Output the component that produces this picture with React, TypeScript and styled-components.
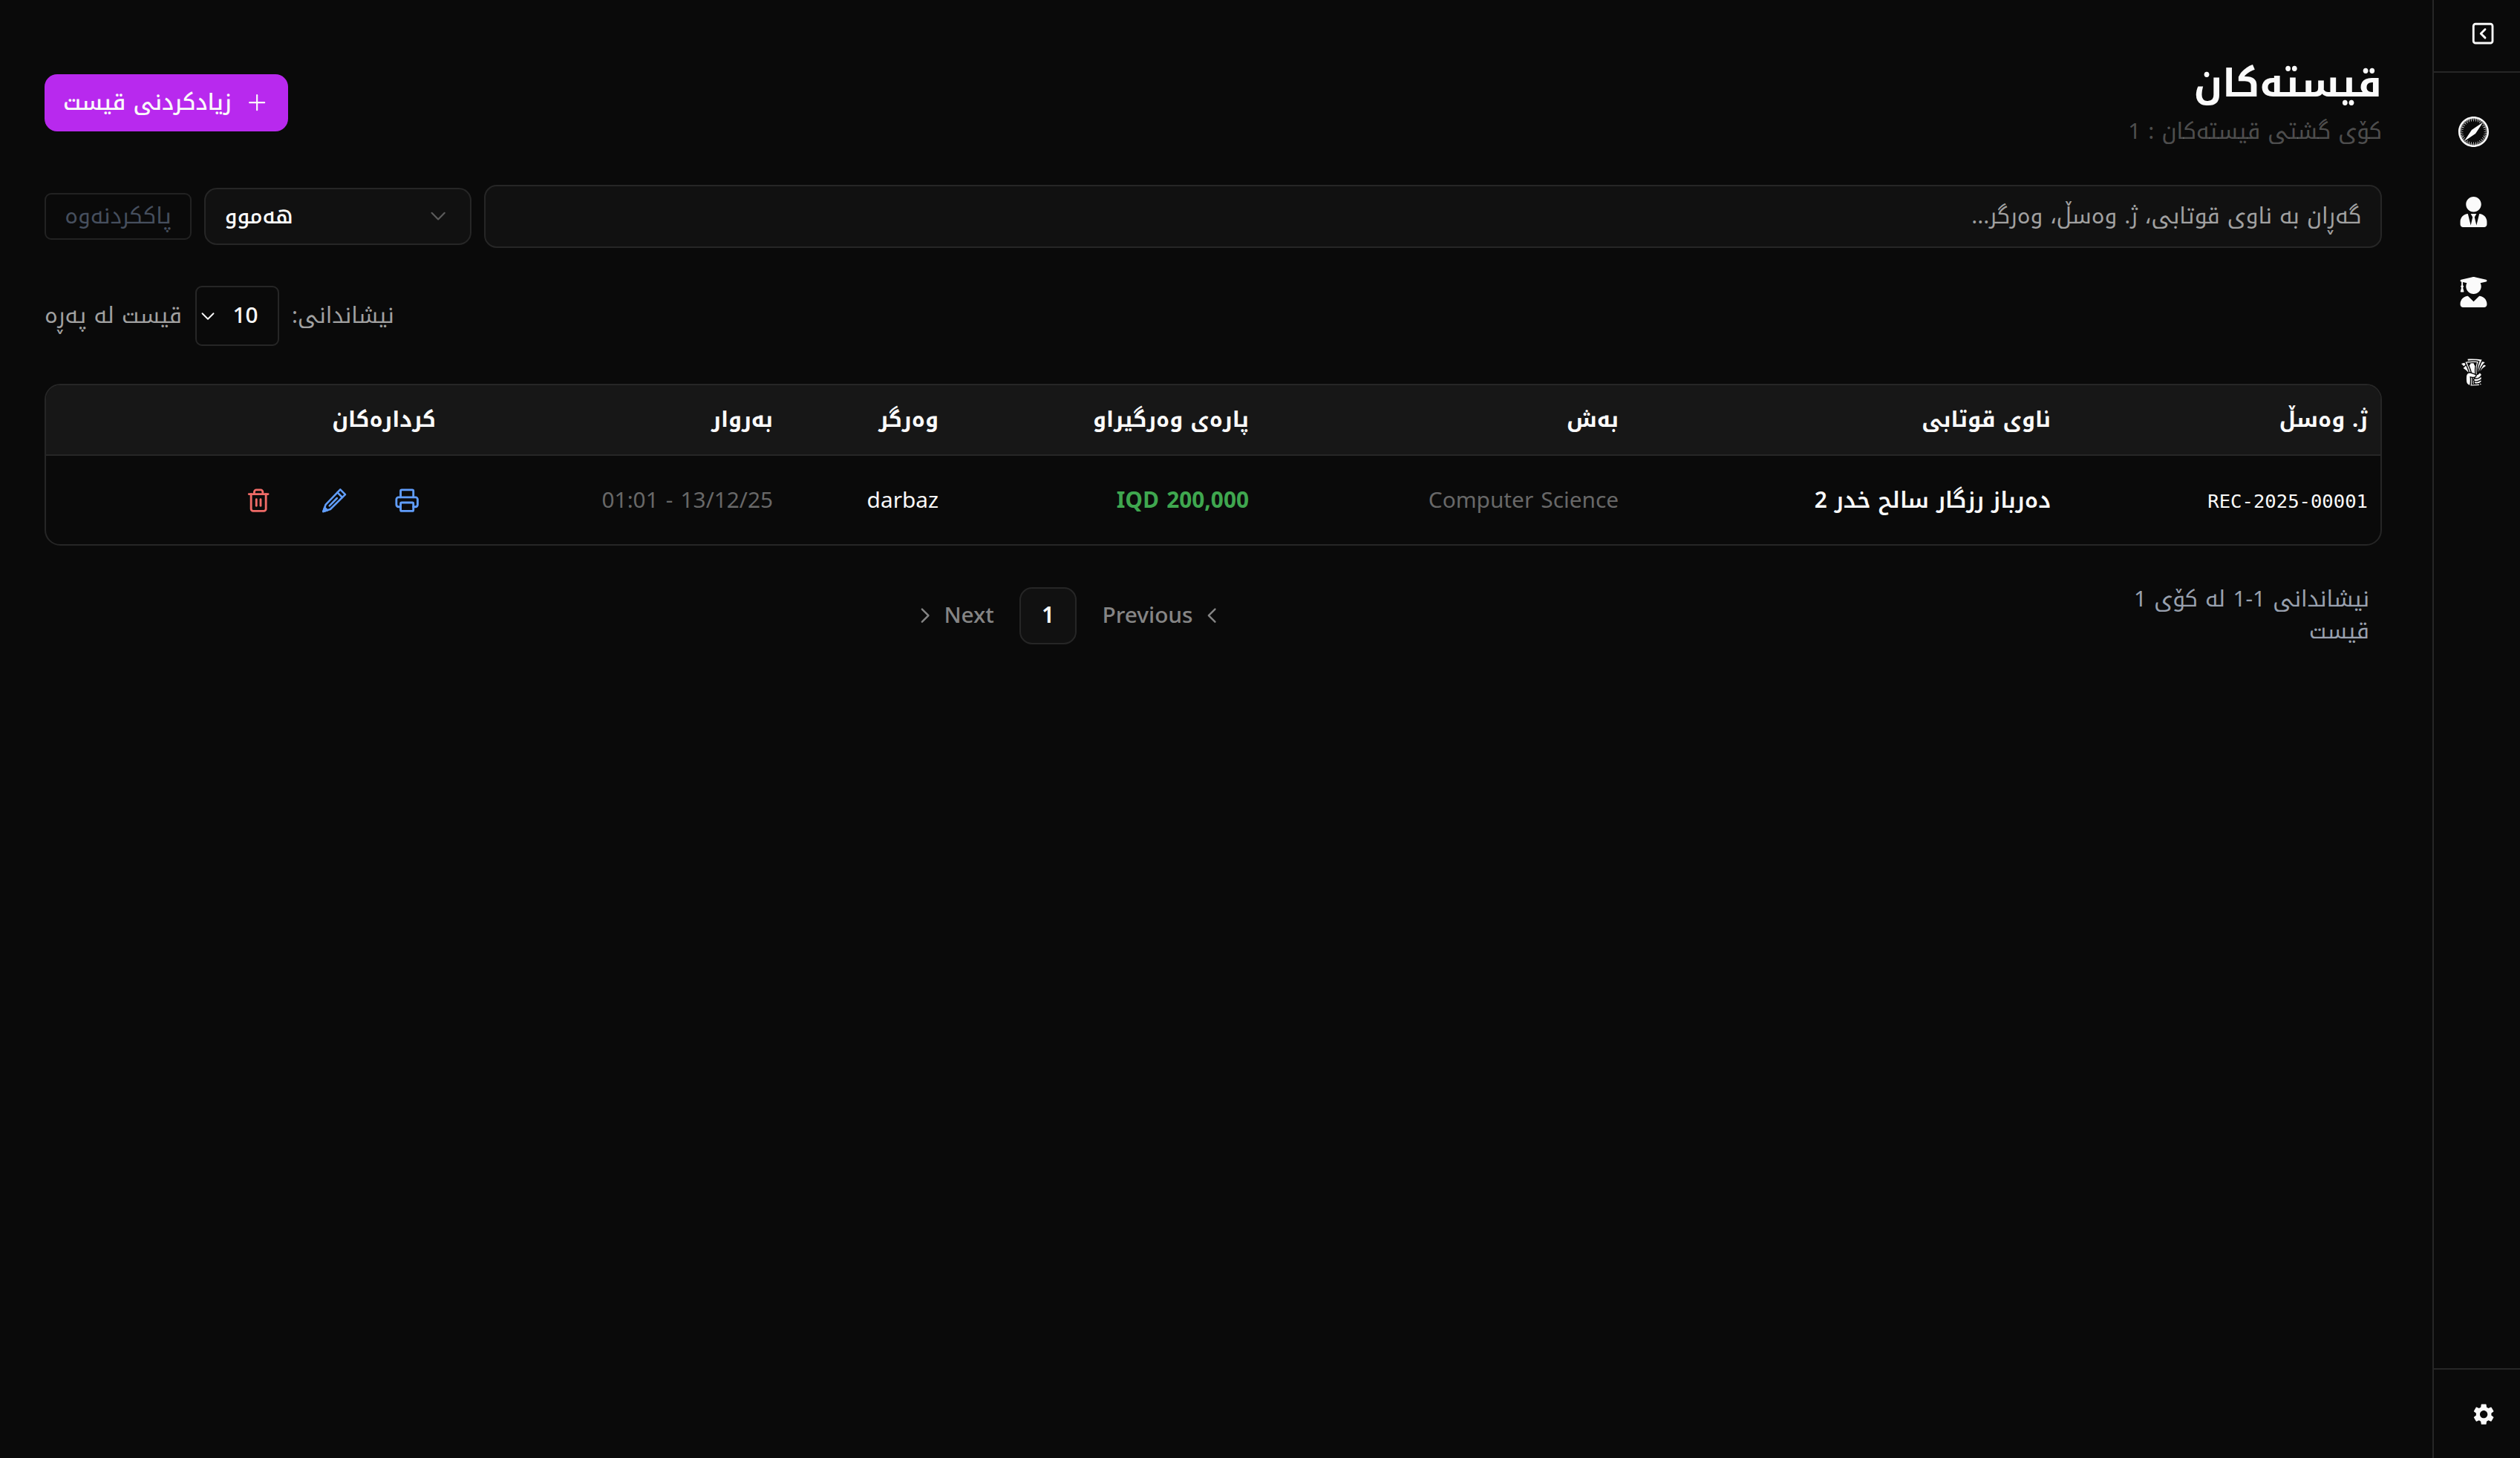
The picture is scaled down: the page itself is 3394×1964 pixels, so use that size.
import React, { useState } from "react";
import styled, { createGlobalStyle } from "styled-components";
import { ChevronDown, ChevronLeft, ChevronRight, Plus, Printer, SquareChevronLeft, Trash2 } from "lucide-react";
import { FaUserGraduate, FaUserTie } from "react-icons/fa";
import { GiTakeMyMoney } from "react-icons/gi";
import { ImSafari } from "react-icons/im";
import { MdSettings } from "react-icons/md";

const ICON = 34.3;

const payments = [
  {
    receipt: "REC-2025-00001",
    student: "دەرباز رزگار سالح خدر 2",
    department: "Computer Science",
    amount: "IQD 200,000",
    receiver: "darbaz",
    date: "01:01 - 13/12/25",
  },
];

const columns = ["ژ. وەسڵ", "ناوی قوتابی", "بەش", "پارەی وەرگیراو", "وەرگر", "بەروار", "کردارەکان"];

const menu = [ImSafari, FaUserTie, FaUserGraduate, GiTakeMyMoney];

const PencilIcon = () => (
  <svg
    width={ICON}
    height={ICON}
    viewBox="0 0 24 24"
    fill="none"
    stroke="currentColor"
    strokeWidth={1.8}
    strokeLinecap="round"
    strokeLinejoin="round"
  >
    <path d="M17.7 1.7 22.4 6.4 8.3 20.3 1.7 22.4 3.9 16z" />
    <path d="M15 4.5 19.6 9.1M7.5 17 14.6 9.8" />
    <path d="M1.7 22.4 3 18.6 5.6 21.2z" fill="currentColor" />
  </svg>
);

const App = () => {
  const [search, setSearch] = useState("");

  return (
    <>
      <GlobalStyle />
      <S.Layout>
        <S.Sidebar>
          <S.SidebarTop>
            <SquareChevronLeft size={ICON} />
          </S.SidebarTop>
          <S.Menu>
            {menu.map((Icon, index) => (
              <S.MenuItem key={index}>
                <Icon size={41} />
              </S.MenuItem>
            ))}
          </S.Menu>
          <S.SidebarBottom>
            <MdSettings size={ICON} />
          </S.SidebarBottom>
        </S.Sidebar>

        <S.Main>
          <S.Header>
            <div>
              <S.Title>قیستەکان</S.Title>
              <S.SubTitle>کۆی گشتی قیستەکان : 1</S.SubTitle>
            </div>
            <S.AddButton type="button">
              <Plus size={ICON} strokeWidth={1.5} />
              زیادکردنی قیست
            </S.AddButton>
          </S.Header>

          <S.Filters>
            <S.Search
              value={search}
              onChange={(e) => setSearch(e.target.value)}
              placeholder="گەڕان بە ناوی قوتابی، ژ. وەسڵ، وەرگر..."
            />
            <S.Select type="button">
              <ChevronDown size={ICON} strokeWidth={1.5} />
              <span>هەموو</span>
            </S.Select>
            <S.ClearButton type="button">پاککردنەوە</S.ClearButton>
          </S.Filters>

          <S.PageSize>
            <span>نیشاندانی:</span>
            <S.PageSizeSelect type="button">
              10
              <ChevronDown size={30} strokeWidth={1.5} />
            </S.PageSizeSelect>
            <span>قیست لە پەڕە</span>
          </S.PageSize>

          <S.TableBox>
            <S.HeadRow>
              {columns.map((column) => (
                <S.HeadCell key={column}>{column}</S.HeadCell>
              ))}
            </S.HeadRow>
            {payments.map((item) => (
              <S.BodyRow key={item.receipt}>
                <S.ReceiptCell>{item.receipt}</S.ReceiptCell>
                <S.Cell $weight={600}>{item.student}</S.Cell>
                <S.Cell $color="#686868">{item.department}</S.Cell>
                <S.Cell $color="#3fa74f" $weight={700}>{item.amount}</S.Cell>
                <S.Cell>{item.receiver}</S.Cell>
                <S.Cell $color="#686868">
                  <bdi dir="ltr">{item.date}</bdi>
                </S.Cell>
                <S.Actions>
                  <S.ActionButton type="button" $width={77} $color="#609dfb">
                    <Printer size={ICON} />
                  </S.ActionButton>
                  <S.ActionButton type="button" $width={85} $color="#609dfb">
                    <PencilIcon />
                  </S.ActionButton>
                  <S.ActionButton type="button" $width={85} $color="#f06b67">
                    <Trash2 size={ICON} />
                  </S.ActionButton>
                </S.Actions>
              </S.BodyRow>
            ))}
          </S.TableBox>

          <S.Footer>
            <S.Info>نیشاندانی 1-1 لە کۆی 1 قیست</S.Info>
            <S.Pagination>
              <S.PageLink type="button">
                <ChevronLeft size={ICON} strokeWidth={1.7} />
                Previous
              </S.PageLink>
              <S.CurrentPage type="button">1</S.CurrentPage>
              <S.PageLink type="button">
                Next
                <ChevronRight size={ICON} strokeWidth={1.7} />
              </S.PageLink>
            </S.Pagination>
          </S.Footer>
        </S.Main>
      </S.Layout>
    </>
  );
};

export default App;

const GlobalStyle = createGlobalStyle`
  * {
    box-sizing: border-box;
    margin: 0;
  }
  body {
    background: #0a0a0a;
    color: #fafafa;
    font-family: "Noto Kufi Arabic", "Noto Sans", sans-serif;
    font-size: 29.8px;
    line-height: 43px;
  }
  button, input {
    font: inherit;
    color: inherit;
    background: none;
    border: none;
    padding: 0;
    outline: none;
  }
  svg {
    flex-shrink: 0;
  }
`;

const Row = styled.div`
  display: grid;
  grid-template-columns: 427fr 582fr 498fr 418fr 223fr 454fr 542fr;
  align-items: center;
`;

const S = {
  Layout: styled.div`
    display: flex;
    direction: rtl;
    width: 100%;
    height: 1964px;
    overflow: hidden;
  `,
  Sidebar: styled.aside`
    display: flex;
    flex-direction: column;
    width: 118px;
    flex-shrink: 0;
    border-left: 2px solid #262626;
  `,
  SidebarTop: styled.div`
    display: flex;
    align-items: center;
    justify-content: center;
    height: 98px;
    padding: 0 0 6px 16px;
    border-bottom: 2px solid #262626;
  `,
  Menu: styled.nav`
    display: flex;
    flex: 1;
    flex-direction: column;
    gap: 31px;
    padding: 41px 9px 0 0;
  `,
  MenuItem: styled.a`
    display: flex;
    align-items: center;
    justify-content: center;
    height: 77px;
  `,
  SidebarBottom: styled.div`
    display: flex;
    align-items: center;
    justify-content: center;
    height: 121px;
    padding: 1px 0 0 18px;
    border-top: 2px solid #262626;
  `,
  Main: styled.main`
    display: flex;
    flex: 1;
    flex-direction: column;
    gap: 51px;
    min-width: 0;
    padding: 79px 68px 0 60px;
  `,
  Header: styled.header`
    display: flex;
    align-items: center;
    justify-content: space-between;
    height: 119px;
  `,
  Title: styled.h1`
    padding-top: 3px;
    font-size: 51px;
    font-weight: 700;
    line-height: 69px;
  `,
  SubTitle: styled.p`
    padding-top: 5px;
    line-height: 49px;
    color: rgba(250, 250, 250, 0.3);
  `,
  AddButton: styled.button`
    display: flex;
    align-items: center;
    gap: 17px;
    width: 328px;
    height: 77px;
    padding: 0 25px;
    border-radius: 17px;
    background: #b829ee;
    font-size: 29.8px;
    font-weight: 500;
    white-space: nowrap;
  `,
  Filters: styled.div`
    display: flex;
    align-items: center;
    gap: 17px;
  `,
  Search: styled.input`
    flex: 1;
    min-width: 0;
    height: 85px;
    padding: 0 25.7px 1px;
    border: 2px solid #262626;
    border-radius: 17px;
    background: #111111;
    &::placeholder {
      color: #a1a1a1;
      opacity: 1;
    }
  `,
  Select: styled.button`
    display: flex;
    align-items: center;
    justify-content: space-between;
    width: 360px;
    height: 77px;
    padding: 0 25.7px;
    border: 2px solid #262626;
    border-radius: 17px;
    background: #111111;
    font-size: 28.8px;
    font-weight: 500;
    svg {
      color: #5c5c5c;
    }
  `,
  ClearButton: styled.button`
    width: 198px;
    height: 63px;
    border: 2px solid #222222;
    border-radius: 9px;
    color: #464f5e;
  `,
  PageSize: styled.div`
    display: flex;
    align-items: center;
    align-self: flex-end;
    gap: 17.5px;
    font-size: 29.8px;
    color: #a1a1a1;
  `,
  PageSizeSelect: styled.button`
    display: flex;
    align-items: center;
    justify-content: space-between;
    width: 113px;
    height: 81px;
    padding: 0 26px 0 0;
    border: 2px solid #262626;
    border-radius: 9px;
    color: #fafafa;
    font-weight: 500;
  `,
  TableBox: styled.section`
    width: 100%;
    height: 218px;
    border: 2px solid #262626;
    border-radius: 21px;
    overflow: hidden;
  `,
  HeadRow: styled(Row)`
    height: 95px;
    border-bottom: 2px solid #262626;
    background: #171717;
  `,
  BodyRow: styled(Row)`
    height: 120px;
  `,
  HeadCell: styled.div`
    padding: 0 17px 1px;
    font-size: 28.9px;
    font-weight: 700;
    white-space: nowrap;
  `,
  Cell: styled.div<{ $color?: string; $weight?: number }>`
    padding: 0 17px;
    color: ${({ $color }) => $color ?? "#fafafa"};
    font-weight: ${({ $weight }) => $weight ?? 400};
    white-space: nowrap;
  `,
  ReceiptCell: styled.div`
    padding: 2px 17px 0;
    font-family: "DejaVu Sans Mono", monospace;
    font-size: 25.6px;
  `,
  Actions: styled.div`
    display: flex;
    gap: 17px;
    padding: 0 17px;
  `,
  ActionButton: styled.button<{ $width: number; $color: string }>`
    display: flex;
    align-items: center;
    justify-content: center;
    width: ${({ $width }) => $width}px;
    height: 69px;
    color: ${({ $color }) => $color};
  `,
  Footer: styled.footer`
    display: flex;
    align-items: center;
    padding: 0 17px;
  `,
  Info: styled.p`
    width: 390px;
    flex-shrink: 0;
    color: #99a1af;
  `,
  Pagination: styled.nav`
    display: flex;
    flex: 1;
    align-items: center;
    justify-content: center;
    gap: 8.6px;
  `,
  PageLink: styled.button`
    display: flex;
    align-items: center;
    gap: 8.6px;
    height: 77px;
    padding: 0 25.7px;
    color: #858585;
    font-weight: 550;
  `,
  CurrentPage: styled.button`
    width: 77px;
    height: 77px;
    border: 2px solid #262626;
    border-radius: 17px;
    background: #111111;
    font-weight: 600;
  `,
};
